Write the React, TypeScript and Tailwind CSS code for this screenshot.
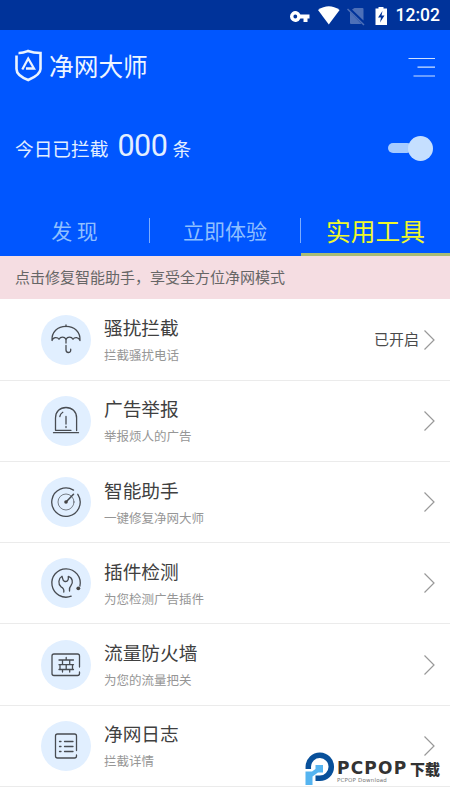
import type { ReactNode } from "react";

type Item = {
  title: string;
  desc: string;
  status?: string;
  icon: ReactNode;
};

const items: Item[] = [
  {
    title: "骚扰拦截",
    desc: "拦截骚扰电话",
    status: "已开启",
    icon: (
      <>
        <path d="M11 25.5C10.500 17 16.500 11.300 25 11.300S39.500 17 39 25.500C37.800 21.800 33.400 21.800 32 24.300C30.500 21.500 26.500 21.500 25 24.300C23.500 21.500 19.500 21.500 18 24.300C16.600 21.800 12.200 21.800 11 25.500Z" />
        <path d="M25 10v1.500M25 24v4M25 30.500v4.500C25 38.300 29.700 38.300 29.700 35.200v-1" />
      </>
    ),
  },
  {
    title: "广告举报",
    desc: "举报烦人的广告",
    icon: (
      <>
        <path d="M30 34.300H14.500V22C14.500 15.500 19 11.500 25 11.500S35.600 15.500 35.600 22V34.500" />
        <path d="M12.500 36.700H37.500M25 20.500V28M25 30.500V31.500M18.800 20.500C19.200 18.500 20 17.300 21.800 16.300" />
      </>
    ),
  },
  {
    title: "智能助手",
    desc: "一键修复净网大师",
    icon: (
      <>
        <path d="M32.500 13.100A14.200 14.200 0 1 0 36.800 17.300" />
        <circle cx="25" cy="25" r="8" strokeWidth="0.7" />
        <path d="M25 25L32.500 17.300" strokeWidth="1.6" />
        <circle cx="25" cy="25" r="1.8" fill="#444" stroke="none" />
      </>
    ),
  },
  {
    title: "插件检测",
    desc: "为您检测广告插件",
    icon: (
      <>
        <path d="M30.200 38.200A14.200 14.200 0 1 1 38.900 28" />
        <circle cx="37.300" cy="30.300" r="1.9" fill="#444" stroke="none" />
        <path d="M22.800 34C23.300 31 22.500 30 20 28.800C16.800 26 17.300 20.500 21 18.300C21.800 19.800 21.200 22.500 23.500 23.300C25.500 24 27 22.800 27.300 21.200V18.300C31.500 19.500 32.500 24.500 30 27.500C28.300 29.300 28.200 30.500 28.500 33" />
      </>
    ),
  },
  {
    title: "流量防火墙",
    desc: "为您的流量把关",
    icon: (
      <>
        <path d="M38.500 27V16Q38.500 14 36.500 14H13Q11 14 11 16V33.500Q11 35.500 13 35.500H36.500Q38.500 35.500 38.500 33.500V32" />
        <path d="M18 20H32.500M18 24.700H32.500M18 29.500H32.500M25.200 17.500V20M21.500 20V24.700M28.700 20V24.700M19 24.700V29.500M25.200 24.700V29.500M31.500 24.700V29.500M21.500 29.500V32M28.700 29.500V32" />
      </>
    ),
  },
  {
    title: "净网日志",
    desc: "拦截详情",
    icon: (
      <>
        <path d="M35.500 29.500V15Q35.500 13 33.500 13H16.500Q14.500 13 14.500 15V35Q14.500 37 16.500 37H33.500Q35.500 37 35.500 35V34" />
        <path d="M18.500 20.500H20M18.500 25.500H20M18.500 30.500H20M23.500 20.500H32M23.500 25.500H32M23.500 30.500H32" />
      </>
    ),
  },
];

function StatusBar() {
  return (
    <div className="flex h-[30px] items-center justify-end bg-[#00339a] pr-[10px] pt-px">
      <svg width="102" height="30" viewBox="0 0 102 30" className="mr-[8px]">
        <path
          fill="#fff"
          fillRule="evenodd"
          d="M14.400 13.500A5.400 5.400 0 1 0 14.400 17.500H17.500V21H21.500V17.500H23.500V13.500ZM9.300 13.600A1.900 1.900 0 1 1 9.300 17.400A1.900 1.900 0 1 1 9.300 13.600Z"
        />
        <path fill="#fff" d="M32 9Q42.800 1.500 53.600 9L42.800 23.500Z" />
        <path fill="#4d70b8" d="M68.500 7H76.500Q77.500 7 77.500 8V19.500L66 8.500ZM64 11L75.500 23H65Q64 23 64 22Z" />
        <path stroke="#4d70b8" strokeWidth="1.5" d="M61.500 8L78 24" />
        <path
          fill="#fff"
          fillRule="evenodd"
          d="M92.500 6H97.500V7.500H101V24H89.500V7.500H92.500ZM96.500 10L92 16.500H95L94 21.500L98.500 14.500H95.500Z"
        />
      </svg>
      <span className="font-[Roboto] text-[17.500px] font-medium leading-none text-white">12:02</span>
    </div>
  );
}

function Header() {
  return (
    <div className="flex h-[226px] flex-col bg-[#0056ff]">
      <div className="flex h-[74px] items-center justify-between pl-[14px] pr-[15px]">
        <div className="flex items-center gap-[7px] pb-[4px]">
          <svg width="28" height="34" viewBox="0 0 28 34" fill="none" stroke="#eaf3ff" strokeWidth="2.6">
            <path d="M4.500 5C8.500 5.300 11.500 4 14 3C17.500 4.300 21.500 5 26.500 5V21C26.500 26.500 19 30 14.200 32C9 30 2.500 26.500 2.500 21V7.500" />
            <path d="M12 20.500H20L14.200 10.500L8.300 21.500" strokeWidth="2.3" />
          </svg>
          <h1 className="pt-px text-[24.700px] leading-none text-[#eef5ff]">净网大师</h1>
        </div>
        <svg width="27" height="20" viewBox="0 0 27 20" stroke="#d0e2ff" strokeWidth="1.2">
          <path d="M0.500 1.500H27M9.500 10.200H27M5.500 19H27" />
        </svg>
      </div>
      <div className="flex h-[88px] items-center justify-between pl-[15px] pr-[17px]">
        <div className="flex items-baseline pb-[4px] text-[18.700px] leading-none text-[#e3efff]">
          <span>今日已拦截</span>
          <span className="ml-[9px] mr-[5px] font-[Roboto] text-[30.500px] tracking-[-0.500px]">000</span>
          <span>条</span>
        </div>
        <div className="flex items-center">
          <div className="-mr-1 h-[10px] w-[24px] rounded-full bg-[#a6cbff]" />
          <div className="size-[25px] rounded-full bg-[#c5dfff]" />
        </div>
      </div>
      <div className="mt-[12px] flex h-[52px] text-[21px] leading-none text-[#8fbfff]">
        <div className="flex w-[149px] items-center justify-center">
          <span>发 现</span>
        </div>
        <div className="flex w-[152px] items-center">
          <div className="h-[25px] w-px bg-[#7bacff]" />
          <span className="flex-1 text-center">立即体验</span>
          <div className="h-[25px] w-px bg-[#7bacff]" />
        </div>
        <div className="flex w-[149px] items-center justify-center border-b-[3px] border-[#a9bb74] pt-[3px] text-[24.700px] text-[#f0f82c]">
          <span>实用工具</span>
        </div>
      </div>
    </div>
  );
}

function Row({ item }: { item: Item }) {
  return (
    <li className="flex h-[81.250px] items-center border-b border-[#ebebeb] pl-[41px] pr-[15px]">
      <svg
        width="50"
        height="50"
        viewBox="0 0 50 50"
        fill="none"
        stroke="#484c52"
        strokeWidth="1.3"
        strokeLinecap="round"
        strokeLinejoin="round"
        className="shrink-0 rounded-full bg-[#e1efff]"
      >
        {item.icon}
      </svg>
      <div className="ml-[13px] flex-1">
        <h2 className="text-[18.700px] leading-[27px] text-[#404040]">{item.title}</h2>
        <p className="mt-[3px] text-[12.500px] leading-[23px] text-[#969696]">{item.desc}</p>
      </div>
      {item.status && <span className="mr-[5px] text-[15px] text-[#4a4a4a]">{item.status}</span>}
      <svg width="11" height="20" viewBox="0 0 11 20" fill="none" stroke="#999" strokeWidth="1.2">
        <path d="M0.500 0.500L10 10L0.500 19.500" />
      </svg>
    </li>
  );
}

function Watermark() {
  return (
    <div className="absolute left-[305px] top-[751px] flex">
      <svg width="30" height="35" viewBox="0 0 30 35">
        <path
          d="M3.300 18V15.500A11.500 11.500 0 1 1 14.800 27.300H10.500"
          fill="none"
          stroke="#08509a"
          strokeWidth="5.5"
        />
        <path fill="#55b4f0" d="M10.500 14H18V21.500H13L7.500 25.500V34H0.500V20.500H7L10.500 18Z" />
      </svg>
      <div className="ml-[2px] pt-[10px] text-[#333]">
        <div className="flex h-[15px] items-center leading-[15px]">
          <span className="w-[73px] font-['DejaVu_Sans'] text-[17px] font-bold leading-[15px] tracking-[1.200px]">
            PCPOP
          </span>
          <span className="text-[15px] font-black leading-[15px]">下载</span>
        </div>
        <div className="mt-px font-['DejaVu_Sans'] text-[5.500px] leading-[6px] tracking-[0.200px] text-[#777]">
          PCPOP Download
        </div>
      </div>
    </div>
  );
}

export default function App() {
  return (
    <div className="relative h-[800px] w-[450px] overflow-hidden bg-white font-['Noto_Sans_CJK_SC',sans-serif]">
      <StatusBar />
      <Header />
      <div className="mb-[0.400px] flex h-[43px] items-center bg-[#f5dde2] pl-[15px] text-[15px] text-[#666]">
        点击修复智能助手，享受全方位净网模式
      </div>
      <ul>
        {items.map((item) => (
          <Row key={item.title} item={item} />
        ))}
      </ul>
      <Watermark />
    </div>
  );
}
